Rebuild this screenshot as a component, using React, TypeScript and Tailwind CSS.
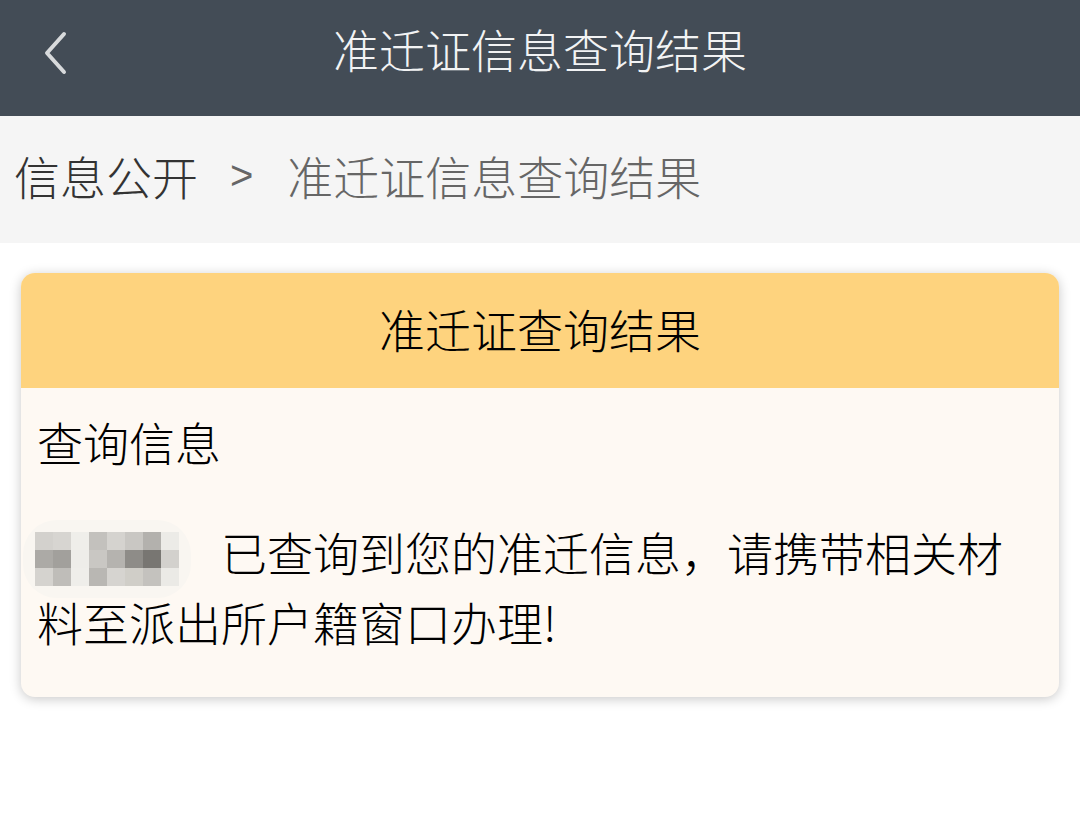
const mosaic = [
  ["#d3d1cd", "#d7d5d1", "#efeeea", "#c3c1bd", "#d5d3cf", "#c9c7c3", "#b3b1ad", "#ecebe7"],
  ["#acaaa6", "#a2a09c", "#eeede9", "#c9c7c3", "#b5b3af", "#8e8c88", "#787672", "#d3d1cd"],
  ["#d5d3cf", "#bfbdb9", "#efeeea", "#b9b7b3", "#d6d4d0", "#d0cec8", "#c4c2be", "#ebeae6"],
];

function BlurredName() {
  return (
    <span className="inline-block align-middle -my-[14px] -ml-[2px] mr-[42px] rounded-[22px] shadow-[0_0_0_12px_#f9f6f1] bg-[#f9f6f1]">
      <span className="grid grid-cols-[repeat(8,18px)] grid-rows-[repeat(3,18px)]">
        {mosaic.flat().map((c, i) => (
          <span key={i} style={{ backgroundColor: c }} />
        ))}
      </span>
    </span>
  );
}

export default function App() {
  return (
    <div className="w-[1080px] h-[817px] bg-white font-['Noto_Sans_CJK_SC','Noto_Sans',sans-serif] font-light">
      <header className="relative h-[116px] bg-[#434c56] flex items-center justify-center">
        <svg className="absolute left-[42px] top-[30px]" width="26" height="46" viewBox="0 0 26 46">
          <path d="M22 4 L5 23 L22 42" fill="none" stroke="#d8dadc" strokeWidth="4" strokeLinecap="round" strokeLinejoin="round" />
        </svg>
        <h1 className="text-[46px] leading-none text-[#f2f3f4] -mt-[20px]">准迁证信息查询结果</h1>
      </header>

      <nav className="h-[127px] bg-[#f5f5f5] flex items-center pl-[14px] text-[46px] leading-none">
        <span className="text-[#333333] -mt-[10px]">信息公开</span>
        <span className="text-[#666666] text-[40px] ml-[32px] mr-[34px] -mt-[10px] font-['Liberation_Sans',sans-serif]">&gt;</span>
        <span className="text-[#666666] -mt-[10px]">准迁证信息查询结果</span>
      </nav>

      <main className="px-[21px] pt-[30px]">
        <section className="rounded-[14px] overflow-hidden shadow-[0_2px_12px_rgba(0,0,0,0.22)] bg-[#fef9f3]">
          <div className="h-[115px] bg-[#fed37e] flex items-center justify-center">
            <h2 className="text-[46px] leading-none text-black -mt-[6px]">准迁证查询结果</h2>
          </div>
          <div className="pl-[16px] pr-[20px] pt-[18px] pb-[41px] text-[46px] leading-[70px] text-black">
            <p>查询信息</p>
            <p className="mt-[40px]">
              <BlurredName />
              已查询到您的准迁信息，请携带相关材料至派出所户籍窗口办理!
            </p>
          </div>
        </section>
      </main>
    </div>
  );
}
